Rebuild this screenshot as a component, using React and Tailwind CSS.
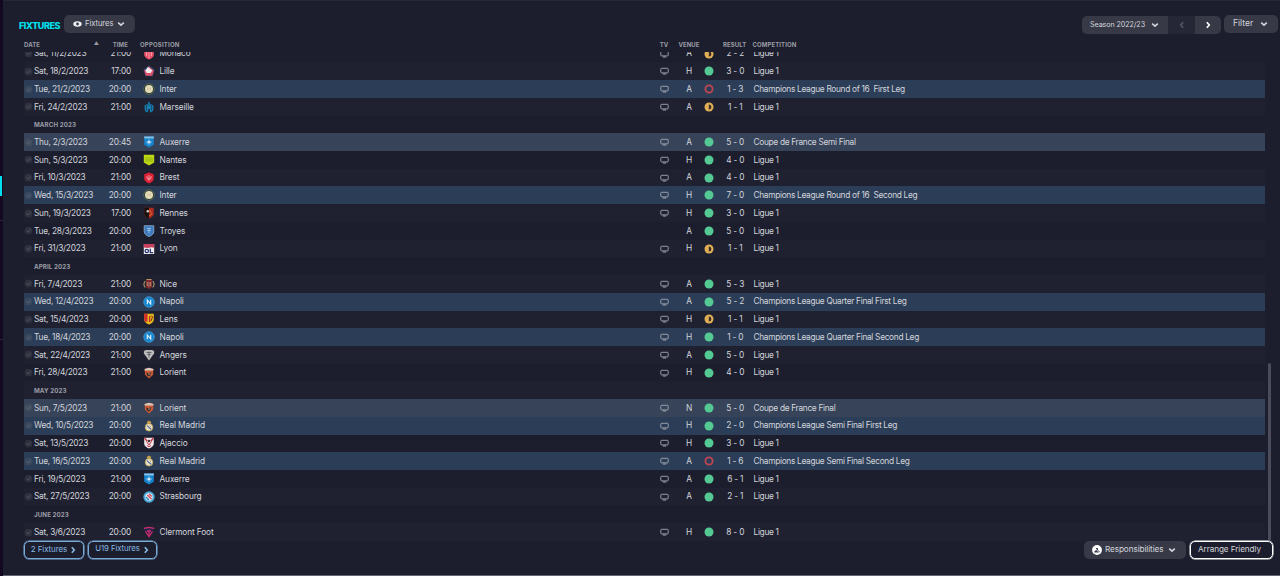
import clsx from 'clsx';

// c: champions league, f: coupe de france
const rows = [
    { date: "Sat, 11/2/2023", time: "21:00", team: "Monaco", venue: "A", res: "D", score: "2 - 2", comp: "Ligue 1" },
    { date: "Sat, 18/2/2023", time: "17:00", team: "Lille", venue: "H", res: "W", score: "3 - 0", comp: "Ligue 1" },
    { date: "Tue, 21/2/2023", time: "20:00", team: "Inter", venue: "A", res: "L", score: "1 - 3", comp: "Champions League Round of 16  First Leg", type: "c" },
    { date: "Fri, 24/2/2023", time: "21:00", team: "Marseille", venue: "A", res: "D", score: "1 - 1", comp: "Ligue 1" },
    { month: "MARCH 2023" },
    { date: "Thu, 2/3/2023", time: "20:45", team: "Auxerre", venue: "A", res: "W", score: "5 - 0", comp: "Coupe de France Semi Final", type: "f" },
    { date: "Sun, 5/3/2023", time: "20:00", team: "Nantes", venue: "H", res: "W", score: "4 - 0", comp: "Ligue 1" },
    { date: "Fri, 10/3/2023", time: "21:00", team: "Brest", venue: "A", res: "W", score: "4 - 0", comp: "Ligue 1" },
    { date: "Wed, 15/3/2023", time: "20:00", team: "Inter", venue: "H", res: "W", score: "7 - 0", comp: "Champions League Round of 16  Second Leg", type: "c" },
    { date: "Sun, 19/3/2023", time: "17:00", team: "Rennes", venue: "H", res: "W", score: "3 - 0", comp: "Ligue 1" },
    { date: "Tue, 28/3/2023", time: "20:00", team: "Troyes", venue: "A", res: "W", score: "5 - 0", comp: "Ligue 1", noTv: true },
    { date: "Fri, 31/3/2023", time: "21:00", team: "Lyon", venue: "H", res: "D", score: "1 - 1", comp: "Ligue 1" },
    { month: "APRIL 2023" },
    { date: "Fri, 7/4/2023", time: "21:00", team: "Nice", venue: "A", res: "W", score: "5 - 3", comp: "Ligue 1" },
    { date: "Wed, 12/4/2023", time: "20:00", team: "Napoli", venue: "A", res: "W", score: "5 - 2", comp: "Champions League Quarter Final First Leg", type: "c" },
    { date: "Sat, 15/4/2023", time: "20:00", team: "Lens", venue: "H", res: "D", score: "1 - 1", comp: "Ligue 1" },
    { date: "Tue, 18/4/2023", time: "20:00", team: "Napoli", venue: "H", res: "W", score: "1 - 0", comp: "Champions League Quarter Final Second Leg", type: "c" },
    { date: "Sat, 22/4/2023", time: "21:00", team: "Angers", venue: "A", res: "W", score: "5 - 0", comp: "Ligue 1" },
    { date: "Fri, 28/4/2023", time: "21:00", team: "Lorient", venue: "H", res: "W", score: "4 - 0", comp: "Ligue 1" },
    { month: "MAY 2023" },
    { date: "Sun, 7/5/2023", time: "21:00", team: "Lorient", venue: "N", res: "W", score: "5 - 0", comp: "Coupe de France Final", type: "f" },
    { date: "Wed, 10/5/2023", time: "20:00", team: "Real Madrid", venue: "H", res: "W", score: "2 - 0", comp: "Champions League Semi Final First Leg", type: "c" },
    { date: "Sat, 13/5/2023", time: "20:00", team: "Ajaccio", venue: "H", res: "W", score: "3 - 0", comp: "Ligue 1" },
    { date: "Tue, 16/5/2023", time: "20:00", team: "Real Madrid", venue: "A", res: "L", score: "1 - 6", comp: "Champions League Semi Final Second Leg", type: "c" },
    { date: "Fri, 19/5/2023", time: "21:00", team: "Auxerre", venue: "A", res: "W", score: "6 - 1", comp: "Ligue 1" },
    { date: "Sat, 27/5/2023", time: "20:00", team: "Strasbourg", venue: "A", res: "W", score: "2 - 1", comp: "Ligue 1" },
    { month: "JUNE 2023" },
    { date: "Sat, 3/6/2023", time: "20:00", team: "Clermont Foot", venue: "H", res: "W", score: "8 - 0", comp: "Ligue 1" },
];

const shield = "M1.2.7h9.6v6c0 2.3-2.2 3.7-4.8 4.9-2.6-1.2-4.8-2.6-4.8-4.9z";

const crests = {
    Monaco: <><path d={shield} fill="#e8506a" /><path d="M6 2v8M3.5 2v6M8.5 2v6" stroke="#f6b9c0" strokeWidth=".7" /></>,
    Lille: <><path d="M6 .4l5.6 4-1.9 6.9H2.3L.4 4.4z" fill="#3a4470" /><path d="M6 1.3l3 3 1.8 1.5-1.6 5H2.8L1.2 5.3l3-.6z" fill="#e05068" /><path d="M5 2l2.4 2.1 2.1 1.2-2 2.7H3.8L2.3 5.6z" fill="#f4edf0" /></>,
    Inter: <><circle cx="6" cy="6" r="5.3" fill="#26392f" stroke="#69765a" strokeWidth=".7" /><circle cx="6" cy="6" r="4" fill="#e4dcb8" /><path d="M4.5 7.6V4.4l1.5 2 1.5-2v3.2" stroke="#c8bd96" strokeWidth=".6" fill="none" /></>,
    Marseille: <><path d="M6 .8v3" stroke="#1787be" strokeWidth="1.4" /><path d="M2.2 4v4c0 1.500.8 2.300 2 2.800L6 4l1.800 6.800c1.200-.5 2-1.300 2-2.800V4M4.100 3v5.500M7.900 3v5.500" stroke="#1787be" strokeWidth="1.2" fill="none" /></>,
    Auxerre: <><path d="M1.200.5h9.600v8.300L6 11.500 1.200 8.800z" fill="#1684cc" /><path d="M1.200.5h9.600v1.900H1.200z" fill="#8cc3e6" /><path d="M6 3.5v5.200M3.400 6.100h5.200M4.800 4.900l2.400 2.400M7.200 4.900L4.800 7.300" stroke="#e4f3fc" strokeWidth=".8" /></>,
    Nantes: <><path d="M.8.8h10.4v7.700L6 11.500.8 8.500z" fill="#bdd712" /><path d="M3 3.500v4.500M5 3v5M7 3v5M9 3.500v4.500" stroke="#7fa317" strokeWidth=".7" /></>,
    Brest: <><path d="M1.2 2.2L6 .6l4.800 1.6v4.500c0 2-2.300 3.700-4.800 4.900-2.500-1.200-4.800-2.900-4.800-4.900z" fill="#db1f35" /><path d="M3.800 4l.6 3h3.200l.6-3M6 3v6" stroke="#f4b6bb" strokeWidth=".8" fill="none" /></>,
    Rennes: <><path d={shield} fill="#a72a23" /><path d="M1.2.7H6v10.900C3.4 10.4 1.2 9 1.2 6.700z" fill="#17110f" /><circle cx="4.800" cy="4.200" r="1.300" fill="#d8c9c0" /><path d="M6.500 2.500l2.500 4.500-3 2" stroke="#d8592c" strokeWidth="1.100" fill="none" /></>,
    Troyes: <><path d={shield} fill="#3d7bc0" stroke="#9db8d4" strokeWidth=".7" /><path d="M4 3.500h4M4.200 5.500h3.600M6 3v5.500" stroke="#a5c8ea" strokeWidth=".8" /></>,
    Lyon: <><path d="M.8 1h10.400v10H.8z" fill="#f1eef0" /><path d="M.8 1h10.400v3.800L8 4.200l-3 .8-4.200-.6z" fill="#c8405c" /><circle cx="3.800" cy="8" r="1.700" fill="none" stroke="#24366d" strokeWidth="1.200" /><path d="M7.300 5.800v3.800h2.900" fill="none" stroke="#24366d" strokeWidth="1.300" /></>,
    Nice: <><path d="M3 1.500h6v7.500L6 11.300 3 9z" fill="#7d2a28" /><path d="M2.300 3C.6 5 .6 7.500 2.300 9.500M9.700 3c1.700 2 1.700 4.500 0 6.500M3.500 1.500h5" stroke="#b39668" strokeWidth="1.100" fill="none" /><path d="M4.300 4v4M6 4v5M7.700 4v4" stroke="#d2a898" strokeWidth=".7" /></>,
    Napoli: <><circle cx="6" cy="6" r="5.300" fill="#1584cf" stroke="#4fb1ea" strokeWidth=".6" /><path d="M4.300 8.300V4l3.400 4V3.700" stroke="#e8f5fe" strokeWidth="1.100" fill="none" /></>,
    Lens: <><path d={shield} fill="#e3b91d" /><path d="M1.2.7h3.300v7.800l-1.700.3C1.800 8.200 1.200 7.500 1.200 6.500zM6 3h1.300v6H6z" fill="#cf2b2e" /><path d="M8 2.500l1.500 1.500-1.500 4" stroke="#7c1b1a" strokeWidth=".9" fill="none" /></>,
    Angers: <><path d="M.9 2L3 .9h6L11.100 2v2.500L6 11.500.9 4.500z" fill="#b9bab9" /><path d="M3.500 3.500h5M4.500 5.500h3M6 2.500v6" stroke="#54565e" strokeWidth=".8" /></>,
    Lorient: <><path d="M1.600 2L6 .8 10.400 2 10 7.700l-4 3.800-4-3.800z" fill="#cc5a35" /><path d="M1.600 2L6 .8 10.400 2l-.1 1.600H1.700z" fill="#d7cbbf" /><path d="M3 5.200l2 1 3.500-1-1 3L6 9.500 4 8.500z" fill="#3a2a29" /><path d="M5 7h2.500" stroke="#cba28a" strokeWidth=".9" /></>,
    "Real Madrid": <><path d="M3.700 2L6 .4 8.300 2l-.7 1.500H4.400z" fill="#c8a047" /><circle cx="6" cy="7.300" r="3.800" fill="#e9e2c6" stroke="#bf9f4b" strokeWidth=".8" /><path d="M3.900 5.600l4.200 3.600" stroke="#4d6ba0" strokeWidth="1.200" /><path d="M6.800 5.500l.8 1.100" stroke="#a34a43" strokeWidth=".7" /></>,
    Ajaccio: <><path d={shield} fill="#eee6e8" /><path d="M1.500 1l2.800 3.300M10.500 1L7.700 4.300" stroke="#c13848" strokeWidth="1.400" /><path d="M3.600 4.500L6 8l2.400-3.500M4 8.500l2 1.200 2-1.200" stroke="#b83443" strokeWidth="1" fill="none" /><circle cx="6" cy="4" r="1.200" fill="#3d3135" /></>,
    Strasbourg: <><circle cx="6" cy="6" r="5.700" fill="#4aa9db" /><circle cx="6" cy="6" r="3.700" fill="#e9f2f6" /><path d="M4.300 4l4.300 4.300M6 3l2.800 2.500" stroke="#cf4553" strokeWidth="1.300" /><path d="M3 6l3 3.200" stroke="#3a8cc8" strokeWidth="1.600" /></>,
    "Clermont Foot": <><path d="M.4 2L6 .8 11.600 2 10 6l-4 5.700L2 6z" fill="#2a2350" /><path d="M.8 2.300L6 1.400l5.200.9M2.500 5.500L6 10.500l3.500-5M4 5h4M6 5v3.500" stroke="#d02c68" strokeWidth="1.300" fill="none" /></>,
};

const Crest = ({ team }) => (
    <svg viewBox="0 0 12 12" className="h-3 w-3 shrink-0">{crests[team]}</svg>
);

const Chevron = ({ dir = "down", className }) => (
    <svg viewBox="0 0 8 8" fill="none" stroke="currentColor" strokeWidth="1.6" className={clsx("h-2 w-2 shrink-0", className)}>
        {dir === "down" && <path d="M1.2 2.7L4 5.2l2.8-2.5" />}
        {dir === "right" && <path d="M2.8 1.2L5.3 4 2.8 6.8" />}
        {dir === "left" && <path d="M5.2 1.2L2.7 4l2.5 2.8" />}
    </svg>
);

const Tick = () => (
    <svg viewBox="0 0 10 10" className="h-[9px] w-[9px] shrink-0">
        <circle cx="5" cy="5" r="4.3" fill="#70747c" fillOpacity=".22" />
        <path d="M3 5l1.5 1.5L7.2 3.6" stroke="#828894" strokeOpacity=".45" fill="none" />
    </svg>
);

const Tv = () => (
    <svg viewBox="0 0 9 8" className="mx-auto h-2 w-[9px]">
        <rect x=".8" y="1.3" width="7.4" height="4.6" rx=".8" fill="none" stroke="#a5a8b2" strokeWidth=".9" />
        <path d="M2.8 7h3.4" stroke="#a5a8b2" strokeWidth="1" />
    </svg>
);

const Result = ({ res }) => (
    <svg viewBox="0 0 10 10" className="h-2.5 w-2.5">
        {res === "W" && <circle cx="5" cy="5" r="4.5" fill="#55c994" />}
        {res === "L" && <circle cx="5" cy="5" r="3.6" fill="none" stroke="#c04451" strokeWidth="1.8" />}
        {res === "D" && <>
            <circle cx="5" cy="5" r="4.5" fill="#e0ae55" />
            <path d="M4.800 2.500a2.500 2.500 0 0 1 0 5z" fill="#3a2c26" />
        </>}
    </svg>
);

// columns shared by the header and the rows
const cols = "grid grid-cols-[10px_73px_33px_512px_24px_28px_20px_29.5px_1fr] items-center";

const Row = ({ row, odd }) => {
    if (row.month) {
        return (
            <div className={clsx("flex h-[17.72px] shrink-0 items-center pl-[10px] pt-px text-[6.2px] font-bold tracking-[0.1px] text-[#9a9ca5]", odd ? "bg-[#1f2130]" : "bg-[#1c1e2d]")}>
                {row.month}
            </div>
        );
    }
    return (
        <div className={clsx(
            cols,
            "h-[17.72px] shrink-0 whitespace-pre text-[8.3px] tracking-[-0.18px] text-[#d3d5dc]",
            row.type === "c" && "bg-[#2c3e57]",
            row.type === "f" && "bg-[#364359]",
            !row.type && (odd ? "bg-[#1f2130]" : "bg-[#1c1e2d]")
        )}>
            <Tick />
            <span className="tracking-[-0.24px]">{row.date}</span>
            <span className="pr-[9px] text-right">{row.time}</span>
            <span className="flex items-center gap-1 pl-[3px]">
                <Crest team={row.team} />
                <span className="pl-[0.5px] tracking-[-0.12px]">{row.team}</span>
            </span>
            <span>{!row.noTv && <Tv />}</span>
            <span className="pr-[3px] pl-px text-center">{row.venue}</span>
            <Result res={row.res} />
            <span className="pr-[7px] text-center">{row.score}</span>
            <span className="tracking-[-0.3px]">{row.comp}</span>
        </div>
    );
};

export default function App() {
    return (
        <div className="flex h-[576px] w-[1280px] overflow-hidden bg-[#1c1e2d] font-['Inter',sans-serif] text-[#d3d5dc]">
            {/* left edge */}
            <div className="w-[3px] shrink-0 bg-[#130820] pt-[176px]">
                <div className="h-5 w-0.5 bg-[#00dff0]" />
                <div className="mt-6 h-px bg-[#2c2638]" />
                <div className="mt-[118px] h-px bg-[#2c2638]" />
            </div>
            <div className="flex min-w-0 flex-1 flex-col border-b border-t border-b-[#666673] border-t-[#242737] pl-[21px]">
                {/* toolbar */}
                <div className="flex h-9 shrink-0 items-start pt-[14px]">
                    <h1 className="-ml-[5px] mt-1 w-[45px] text-[9px] font-extrabold leading-[14px] tracking-[-0.4px] text-[#00e2ef]">FIXTURES</h1>
                    <button className="flex h-[18px] w-[71px] items-center rounded-[5px] bg-[#373947] pl-[9px] text-[7.6px] tracking-[-0.05px]">
                        <svg viewBox="0 0 9 8" className="mr-[3px] h-2 w-[9px]">
                            <ellipse cx="4.5" cy="4" rx="4.2" ry="2.8" fill="#f0f1f4" />
                            <circle cx="4.5" cy="4" r="1.4" fill="#373947" />
                        </svg>
                        Fixtures
                        <Chevron className="ml-auto mr-[10px]" />
                    </button>
                    <div className="ml-auto mr-0.5 flex items-start">
                        <button className="mt-px flex h-[18px] w-[86px] items-center rounded-l-[5px] bg-[#373947] pl-2 text-[7.2px] tracking-[-0.1px]">
                            Season 2022/23
                            <Chevron className="ml-auto mr-[9px]" />
                        </button>
                        <button className="mt-px flex h-[18px] w-[27px] items-center justify-center bg-[#252736] text-[#555765]"><Chevron dir="left" /></button>
                        <button className="mt-px flex h-[18px] w-[26px] items-center justify-center rounded-r-[5px] bg-[#373947] text-white"><Chevron dir="right" /></button>
                        <button className="ml-[3px] flex h-[18px] w-[54px] items-center rounded-[5px] bg-[#373947] pb-0.5 pl-[9px] text-[8.5px]">
                            Filter
                            <Chevron className="ml-auto mr-[10px] mt-0.5" />
                        </button>
                    </div>
                </div>

                {/* column titles */}
                <div className={clsx(cols, "mr-[15px] h-[15px] shrink-0 pb-px text-[6px] font-bold tracking-[0.1px] text-[#9a9ca5]")}>
                    <span className="whitespace-nowrap">DATE</span>
                    <span className="pr-2 text-right text-[5px]">▲</span>
                    <span className="pr-[12px] text-right">TIME</span>
                    <span className="tracking-[0.2px]">OPPOSITION</span>
                    <span className="text-center">TV</span>
                    <span className="pr-0.5 text-center">VENUE</span>
                    <span />
                    <span className="-ml-px">RESULT</span>
                    <span className="-ml-px">COMPETITION</span>
                </div>

                {/* fixture list, scrolled to the end */}
                <div className="flex h-[489px] shrink-0">
                    <div className="flex h-full w-[1241px] flex-col justify-end overflow-hidden pb-[0.15px]">
                        {rows.map((row, i) => <Row key={i} row={row} odd={i % 2 === 1} />)}
                    </div>
                    <div className="ml-[3px] mt-[311px] w-[2.5px] rounded-full bg-[#4a4b5b]" />
                </div>

                {/* actions */}
                <div className="flex pr-[7px] text-[8.2px] tracking-[-0.1px]">
                    <button className="flex h-[17.5px] w-[60px] items-center justify-center gap-0.5 rounded-[5px] border border-[#7aaad8] pb-px text-[#8ab8e2] shadow-[0_0_0_0.5px_#7aaad8]">
                        <span className="text-[8px]">2 Fixtures</span> <Chevron dir="right" className="mt-px" />
                    </button>
                    <button className="ml-[4px] flex h-[17.5px] w-[69px] items-center justify-center gap-0.5 rounded-[5px] border border-[#7aaad8] pb-px text-[#8ab8e2] shadow-[0_0_0_0.5px_#7aaad8]">
                        <span className="text-[7.8px]">U19 Fixtures</span> <Chevron dir="right" className="mt-px" />
                    </button>
                    <button className="ml-auto flex h-[17.5px] w-[102px] items-center rounded-[5px] bg-[#373947] pb-px pl-2">
                        <svg viewBox="0 0 10 10" className="mr-[3px] mt-px h-2.5 w-2.5">
                            <circle cx="5" cy="5" r="4.9" fill="#fff" />
                            <path d="M2.3 7.5c0-1.8 1-2 1.8-2.3V3h1.8v2.2c1 .3 1.800.7 1.800 2.300z" fill="#373947" />
                            <path d="M2.5 2.5l5 5.5" stroke="#fff" strokeWidth=".8" />
                        </svg>
                        Responsibilities
                        <Chevron className="ml-auto mr-[10px] mt-px" />
                    </button>
                    <button className="ml-[4px] flex h-[17.5px] w-[83px] items-center justify-center rounded-[5px] border border-white pb-0.5 pr-1 shadow-[0_0_0_0.5px_#fff]">Arrange Friendly</button>
                </div>
            </div>
        </div>
    );
}
